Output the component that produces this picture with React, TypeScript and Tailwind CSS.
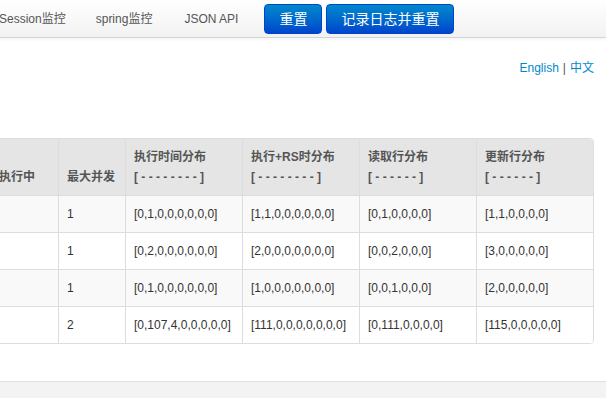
import React from 'react';

const font = { fontFamily: '"Liberation Sans", Arial, "Noto Sans CJK SC", sans-serif' };

type Row = { max: string; time: string; rs: string; read: string; update: string };

const rows: Row[] = [
  { max: '1', time: '[0,1,0,0,0,0,0,0]', rs: '[1,1,0,0,0,0,0,0]', read: '[0,1,0,0,0,0]', update: '[1,1,0,0,0,0]' },
  { max: '1', time: '[0,2,0,0,0,0,0,0]', rs: '[2,0,0,0,0,0,0,0]', read: '[0,0,2,0,0,0]', update: '[3,0,0,0,0,0]' },
  { max: '1', time: '[0,1,0,0,0,0,0,0]', rs: '[1,0,0,0,0,0,0,0]', read: '[0,0,1,0,0,0]', update: '[2,0,0,0,0,0]' },
  { max: '2', time: '[0,107,4,0,0,0,0,0]', rs: '[111,0,0,0,0,0,0,0]', read: '[0,111,0,0,0,0]', update: '[115,0,0,0,0,0]' },
];

const cols = 'grid grid-cols-[67px_67px_117px_117px_117px_117px]';

const Head: React.FC<{ title: string; range?: string; first?: boolean }> = ({ title, range, first }) => (
  <div className={`flex flex-col justify-end px-2 py-2 text-[12px] leading-5 font-bold text-[#555] ${first ? '' : 'border-l border-[#ddd]'}`}>
    <span className="whitespace-nowrap">{title}</span>
    {range && <span className="whitespace-nowrap">{range}</span>}
  </div>
);

const Cell: React.FC<{ children?: React.ReactNode; first?: boolean }> = ({ children, first }) => (
  <div className={`border-t border-[#ddd] px-2 py-2 text-[12px] leading-5 text-[#333] whitespace-nowrap ${first ? '' : 'border-l'}`}>
    {children}
  </div>
);

export default function App() {
  return (
    <div className="w-[606px] h-[398px] overflow-hidden bg-white flex flex-col" style={font}>
      {/* navbar */}
      <div className="h-[38px] shrink-0 flex items-center bg-gradient-to-b from-white to-[#f2f2f2] border-b border-[#d4d4d4] shadow-[0_1px_4px_rgba(0,0,0,0.06)]">
        <div className="flex items-center ml-[-16px]">
          <span className="px-[15px] text-[12px] leading-5 text-[#555] whitespace-nowrap">Session监控</span>
          <span className="pl-[15px] pr-[16px] text-[12px] leading-5 text-[#555] whitespace-nowrap">spring监控</span>
          <span className="px-[16px] text-[12px] leading-5 text-[#555] whitespace-nowrap">JSON API</span>
          <div className="flex gap-1 ml-[10px]">
            <button className="h-[30px] px-[14px] rounded-[4px] border border-[#0044cc] bg-gradient-to-b from-[#0088cc] to-[#0044cc] text-white text-[14px] leading-5 whitespace-nowrap">重置</button>
            <button className="h-[30px] px-[14px] rounded-[4px] border border-[#0044cc] bg-gradient-to-b from-[#0088cc] to-[#0044cc] text-white text-[14px] leading-5 whitespace-nowrap">记录日志并重置</button>
          </div>
        </div>
      </div>

      {/* main */}
      <div className="flex-1 flex flex-col">
        <div className="flex justify-end pr-[12px] pt-[20px] text-[12px] leading-5">
          <span className="text-[#0088cc]">English</span>
          <span className="text-[#555] mx-1">|</span>
          <span className="text-[#0088cc]">中文</span>
        </div>

        <div className="mt-[60px] overflow-hidden">
          <div className="ml-[-10px] w-[604px] border border-[#ddd] rounded-r-[4px] overflow-hidden">
            <div className={`${cols} bg-[#e5e5e5]`}>
              <Head title="执行中" first />
              <Head title="最大并发" />
              <Head title="执行时间分布" range="[ - - - - - - - - ]" />
              <Head title="执行+RS时分布" range="[ - - - - - - - - ]" />
              <Head title="读取行分布" range="[ - - - - - - ]" />
              <Head title="更新行分布" range="[ - - - - - - ]" />
            </div>
            {rows.map((r, i) => (
              <div key={i} className={`${cols} ${i % 2 === 0 ? 'bg-[#f9f9f9]' : 'bg-white'}`}>
                <Cell first />
                <Cell>{r.max}</Cell>
                <Cell>{r.time}</Cell>
                <Cell>{r.rs}</Cell>
                <Cell>{r.read}</Cell>
                <Cell>{r.update}</Cell>
              </div>
            ))}
          </div>
        </div>
      </div>

      {/* footer */}
      <div className="h-[17px] shrink-0 bg-[#f3f3f3] border-t border-[#e0e0e0]" />
    </div>
  );
}
